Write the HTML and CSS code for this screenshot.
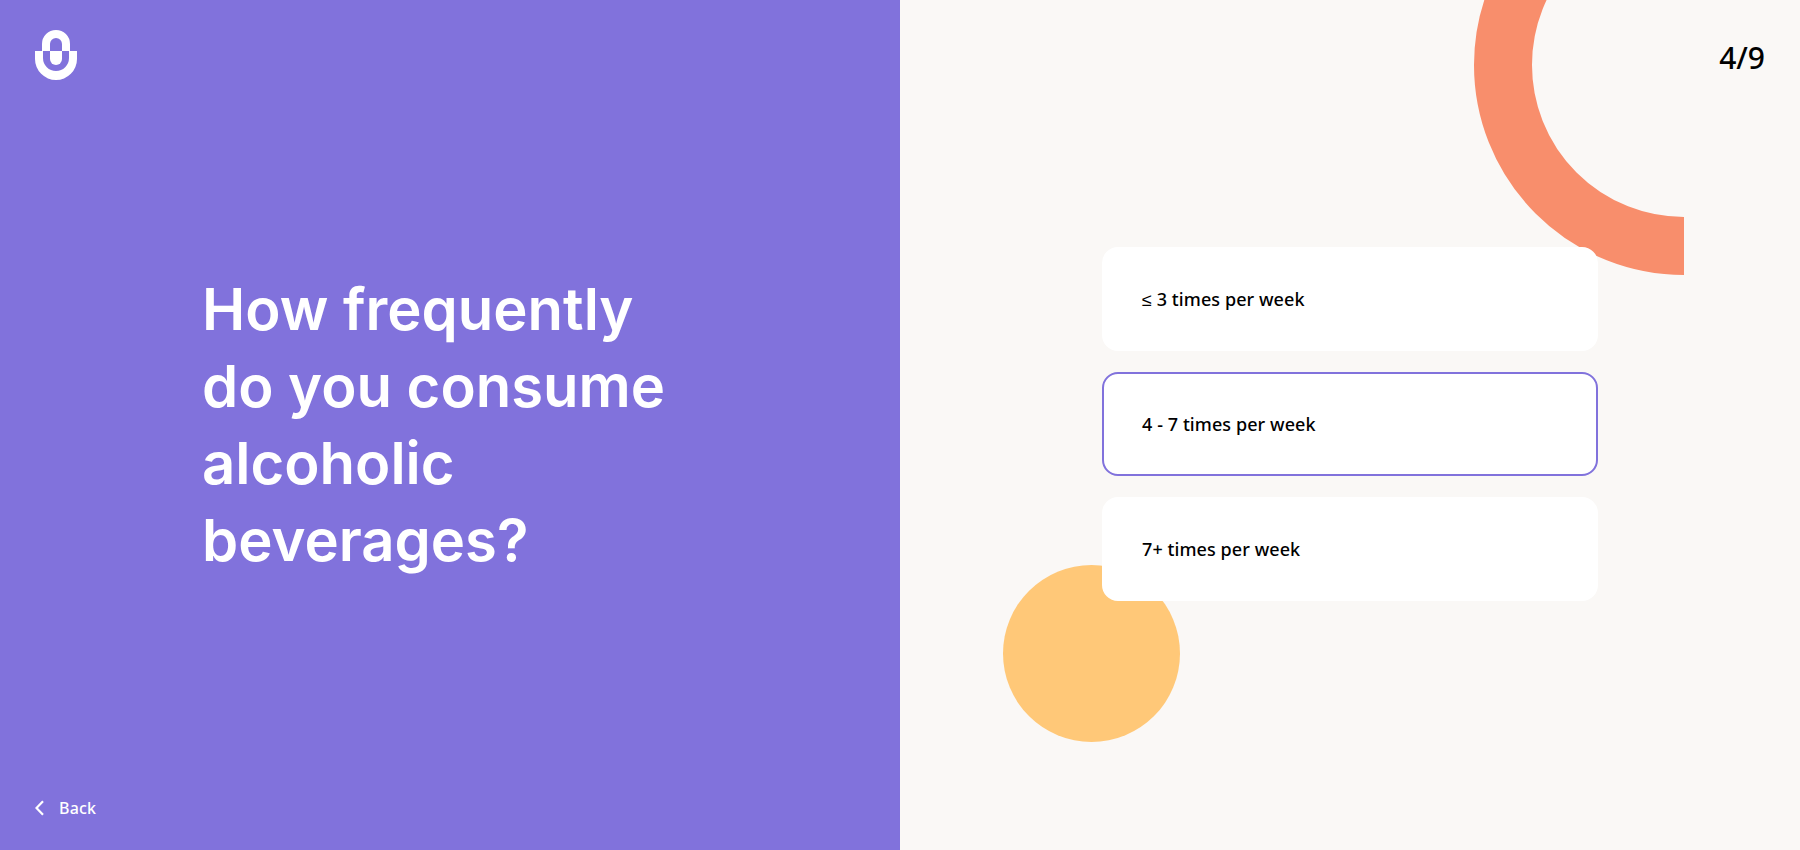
FILE: index.html
```html
<!DOCTYPE html>
<html lang="en">
<head>
<meta charset="utf-8">
<title>Question 4 of 9</title>
<link rel="stylesheet" href="styles.css">
</head>
<body>
<main class="split">
  <section class="intro">
    <svg class="logo" width="42" height="50" viewBox="0 0 42 50" aria-label="Logo">
      <path class="logo-fill" d="M7 21V14A14 14 0 0 1 35 14V21H27V14A6 6 0 0 0 15 14V21Z"/>
      <path class="logo-fill" d="M0 21H8V28A13 13 0 0 0 34 28V21H42V29A21 21 0 0 1 0 29Z"/>
      <path class="logo-fill" d="M15 21H27V29A6 6 0 0 1 15 29Z"/>
    </svg>
    <h1 class="question">How frequently do you consume alcoholic beverages?</h1>
    <a class="back" href="#">
      <svg class="back-icon" width="10" height="16" viewBox="0 0 10 16"><path d="M8 1.300 1.500 8 8 14.700"/></svg>
      <span>Back</span>
    </a>
  </section>
  <section class="answers">
    <svg class="ring" width="268" height="275" viewBox="0 0 268 275"><circle cx="268" cy="65" r="181"/></svg>
    <div class="dot"></div>
    <div class="counter">4/9</div>
    <div class="options">
      <button class="option">≤ 3 times per week</button>
      <button class="option selected">4 - 7 times per week</button>
      <button class="option">7+ times per week</button>
    </div>
  </section>
</main>
</body>
</html>
```

FILE: styles.css
```css
* { box-sizing: border-box; }
html, body { margin: 0; height: 100%; }
body { font-family: "Noto Sans", sans-serif; color: #000; overflow: hidden; }
.split { display: grid; grid-template-columns: 1fr 1fr; height: 850px; }
.intro {
  background: #8172dc;
  color: #fff;
  display: grid;
  grid-template-rows: 1fr auto 1fr;
  padding: 30px 34px 31px 35px;
}
.logo { align-self: start; display: block; }
.logo-fill { fill: #fff; }
.question {
  margin: 0 0 0 167px;
  max-width: 480px;
  font-family: Inter, sans-serif;
  font-weight: 600;
  font-size: 58px;
  line-height: 77px;
  color: #fff;
}
.back {
  align-self: end;
  display: flex;
  align-items: center;
  gap: 14px;
  color: #fff;
  text-decoration: none;
  font-weight: 500;
  font-size: 16px;
  letter-spacing: 0.2px;
  line-height: 22px;
}
.back-icon { fill: none; stroke: #fff; stroke-width: 2.200; display: block; }
.answers {
  position: relative;
  background: #faf8f6;
  display: grid;
  grid-template-rows: 1fr auto 1fr;
  justify-items: center;
  overflow: hidden;
}
.ring { position: absolute; left: 516px; top: 0; fill: none; stroke: #f88e6c; stroke-width: 58; }
.dot { position: absolute; left: 103px; top: 565px; width: 177px; height: 177px; border-radius: 50%; background: #ffc878; }
.counter {
  position: relative;
  justify-self: end;
  align-self: start;
  margin: 38px 35px 0 0;
  font-weight: 500;
  font-size: 30px;
  line-height: 40px;
}
.options { position: relative; grid-row: 2; display: flex; flex-direction: column; gap: 21px; width: 496px; margin-bottom: 2px; }
.option {
  display: block;
  height: 104px;
  padding: 0 38px;
  border: 2px solid #fff;
  border-radius: 16px;
  background: #fff;
  color: #000;
  font-family: "Noto Sans", sans-serif;
  font-weight: 500;
  font-size: 18px;
  letter-spacing: 0.08px;
  text-align: left;
}
.option.selected { border-color: #8172dc; }
```
